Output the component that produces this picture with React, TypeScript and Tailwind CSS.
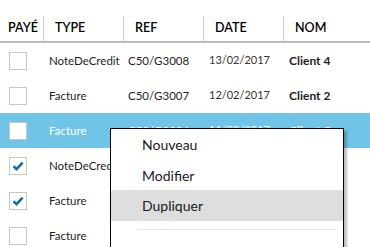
import { Fragment } from 'react';

interface Row {
  paid: boolean;
  type: string;
  ref: string;
  date: string;
  nom: string;
  selected?: boolean;
}

// rows 4-6 sit under the context menu, only their first two cells show
const rows: Row[] = [
  { paid: false, type: 'NoteDeCredit', ref: 'C50/G3008', date: '13/02/2017', nom: 'Client 4' },
  { paid: false, type: 'Facture', ref: 'C50/G3007', date: '12/02/2017', nom: 'Client 2' },
  { paid: false, type: 'Facture', ref: 'C50/G3006', date: '11/02/2017', nom: 'Client 5', selected: true },
  { paid: true, type: 'NoteDeCredit', ref: '', date: '', nom: '' },
  { paid: true, type: 'Facture', ref: '', date: '', nom: '' },
  { paid: false, type: 'Facture', ref: '', date: '', nom: '' },
];

const headers = ['PAYÉ', 'TYPE', 'REF', 'DATE', 'NOM'];

function CheckBox({ checked }: { checked: boolean }) {
  return (
    <div className="w-[18px] h-[18px] border border-[#c6c6c6] bg-white flex items-center justify-center">
      {checked && (
        <svg width="14" height="14" viewBox="0 0 14 14">
          <path
            d="M2.5 7.2 L5.6 10.2 L11.6 3.6"
            fill="none"
            stroke="#1b6ea3"
            strokeWidth={2.6}
          />
        </svg>
      )}
    </div>
  );
}

export default function App() {
  return (
    <div
      className="relative w-[370px] h-[247px] overflow-hidden bg-white text-[#1e1e1e]"
      style={{ fontFamily: 'Lato, "Open Sans", sans-serif' }}
    >
      <div className="pt-4">
        {/* header */}
        <div className="grid grid-cols-[44px_80px_80px_80px_1fr] h-[25px] text-[12.5px] font-semibold text-black">
          {headers.map((h, i) => (
            <div
              key={h}
              className={`flex items-center border-[#c8c8c8] ${i < 4 ? 'border-r' : ''} ${
                i === 0 ? 'pl-2' : 'pl-[11px]'
              }`}
            >
              {h}
            </div>
          ))}
        </div>
        <div className="h-[2px] bg-[#bcbcbc]" />

        {/* rows */}
        {rows.map((r, idx) => (
          <div
            key={idx}
            className={`grid grid-cols-[44px_80px_80px_80px_1fr] h-[35px] items-center text-[11.5px] ${
              r.selected ? 'bg-[#70c4e8] text-white' : ''
            }`}
          >
            <div className="pl-[9px]">
              <CheckBox checked={r.paid} />
            </div>
            <div className="pl-[5px] whitespace-nowrap">{r.type}</div>
            <div className="pl-1 whitespace-nowrap">{r.ref}</div>
            <div className={`pl-[5px] text-[11px] ${r.selected ? '' : 'text-[#333]'}`}>{r.date}</div>
            <div className="pl-[5px] text-[12px] font-bold whitespace-nowrap">{r.nom}</div>
          </div>
        ))}
      </div>

      {/* context menu */}
      <div className="absolute left-[110px] top-[128px] w-[234px] h-[140px] bg-white border border-black shadow-[3px_3px_2px_rgba(0,0,0,0.25)] text-[14px] text-[#1a1a1a]">
        {['Nouveau', 'Modifier', 'Dupliquer'].map((item, i) => (
          <Fragment key={item}>
            <div
              className={`flex items-center pl-[31px] ${i === 1 ? 'h-[30px]' : 'h-[31px]'} ${
                i === 2 ? 'bg-[#dedede]' : ''
              }`}
            >
              {item}
            </div>
          </Fragment>
        ))}
        <div className="mt-2 ml-[26px] mr-[7px] h-px bg-[#e0e0e0]" />
      </div>
    </div>
  );
}
